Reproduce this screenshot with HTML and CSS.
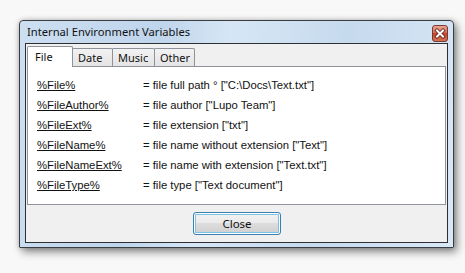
FILE: index.html
```html
<!DOCTYPE html>
<html>
<head>
<meta charset="utf-8">
<link rel="stylesheet" href="styles.css">
</head>
<body>
<div class="window">
  <div class="titlebar">
    <span class="title">Internal Environment Variables</span>
    <span class="close-x">
      <svg width="16" height="17" viewBox="0 0 16 17">
        <defs>
          <linearGradient id="rg" x1="0" y1="0" x2="0" y2="1">
            <stop offset="0" stop-color="#e9a99a"/>
            <stop offset="0.45" stop-color="#d66c55"/>
            <stop offset="0.5" stop-color="#c4442b"/>
            <stop offset="1" stop-color="#d2765a"/>
          </linearGradient>
        </defs>
        <rect x="0.5" y="0.5" width="15" height="16" rx="2.5" fill="url(#rg)" stroke="#7a3b30"/>
        <path d="M5 5.5 L11 11.5 M11 5.5 L5 11.5" stroke="#5a2418" stroke-width="3.6" stroke-linecap="square"/>
        <path d="M5 5.5 L11 11.5 M11 5.5 L5 11.5" stroke="#ffffff" stroke-width="2" stroke-linecap="square"/>
      </svg>
    </span>
  </div>
  <div class="client">
    <div class="tabs">
      <div class="tab active">File</div>
      <div class="tab">Date</div>
      <div class="tab">Music</div>
      <div class="tab">Other</div>
    </div>
    <div class="panel">
      <div class="row"><span class="var">%File%</span><span class="desc">= file full path ° ["C:\Docs\Text.txt"]</span></div>
      <div class="row"><span class="var">%FileAuthor%</span><span class="desc">= file author ["Lupo Team"]</span></div>
      <div class="row"><span class="var">%FileExt%</span><span class="desc">= file extension ["txt"]</span></div>
      <div class="row"><span class="var">%FileName%</span><span class="desc">= file name without extension ["Text"]</span></div>
      <div class="row"><span class="var">%FileNameExt%</span><span class="desc">= file name with extension ["Text.txt"]</span></div>
      <div class="row"><span class="var">%FileType%</span><span class="desc">= file type ["Text document"]</span></div>
    </div>
    <div class="actions">
      <button class="btn">Close</button>
    </div>
  </div>
</div>
</body>
</html>
```
FILE: styles.css
```css
html, body {
  margin: 0;
  padding: 0;
}
body {
  background: #f8f8f8;
  padding: 20px 0 0 19px;
  height: 273px;
  box-sizing: border-box;
  font-family: "Noto Sans", "Open Sans", sans-serif;
}
.window {
  width: 435px;
  height: 228px;
  box-sizing: border-box;
  border: 1px solid #3a3d42;
  border-radius: 4px 4px 1px 1px;
  background: linear-gradient(100deg, #cddff1 0%, #bfd5ec 30%, #d6e6f5 45%, #c6daee 70%, #d9e8f6 100%);
  padding: 0 5px 4px 5px;
  display: flex;
  flex-direction: column;
  box-shadow: 3px 4px 9px rgba(0,0,0,0.45), 0 0 5px rgba(0,0,0,0.2);
}
.titlebar {
  height: 22px;
  display: flex;
  align-items: center;
  justify-content: space-between;
  padding-left: 2px;
}
.title {
  font-size: 11.2px;
  color: #111;
  margin-top: -1px;
}
.close-x {
  width: 16px;
  height: 17px;
  align-self: flex-start;
  margin-top: 4px;
  display: block;
}
.close-x svg {
  display: block;
}
.client {
  height: 200px;
  box-sizing: border-box;
  border: 1px solid #2d3035;
  background: #f0f0f0;
  padding: 2px 1px 0 1px;
  display: flex;
  flex-direction: column;
}
.tabs {
  display: flex;
  align-items: flex-end;
  height: 20px;
  position: relative;
  z-index: 1;
}
.tab {
  box-sizing: border-box;
  height: 18px;
  border: 1px solid #8e9299;
  border-bottom: none;
  background: linear-gradient(#f2f2f2, #e4e4e4);
  font-family: "Noto Sans", sans-serif;
  font-size: 11px;
  line-height: 17px;
  color: #111;
  padding: 0 5px;
  margin-left: -1px;
  border-radius: 2px 2px 0 0;
}
.tab:first-child {
  margin-left: 0;
}
.tab.active {
  height: 21px;
  margin-bottom: -1px;
  background: #fff;
  width: 46px;
  padding-left: 7px;
  line-height: 19px;
  position: relative;
  z-index: 2;
}
.tab:nth-child(2) { width: 41px; }
.tab:nth-child(3) { width: 43px; }
.tab:nth-child(4) { width: 41px; }
.panel {
  height: 139px;
  box-sizing: border-box;
  background: #fff;
  border: 1px solid #8e9299;
  padding: 8px 0 0 9px;
  font-family: "Liberation Sans", Arial, sans-serif;
  font-size: 11.3px;
  color: #111;
}
.row {
  display: flex;
  height: 20px;
  align-items: center;
}
.var {
  width: 106px;
  text-decoration: underline;
  flex: none;
}
.actions {
  display: flex;
  justify-content: center;
  padding-top: 7px;
}
.btn {
  width: 88px;
  height: 23px;
  box-sizing: border-box;
  border: 1px solid #3c7fb1;
  border-radius: 3px;
  background: linear-gradient(#f2f2f2 0%, #ebebeb 45%, #dddddd 50%, #cfcfcf 100%);
  box-shadow: inset 0 0 0 1px #ffffff, inset 0 0 0 2px #78c3e6;
  font-family: "Noto Sans", sans-serif;
  font-size: 11.5px;
  color: #111;
  padding: 0;
  margin-left: 1px;
}
```
